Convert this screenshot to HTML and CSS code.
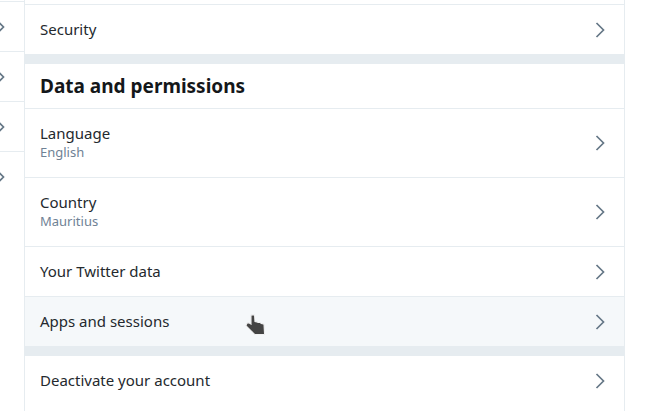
FILE: index.html
```html
<!DOCTYPE html>
<html lang="en">
<head>
<meta charset="utf-8">
<title>Settings</title>
<link rel="stylesheet" href="styles.css">
</head>
<body>
<div class="page">
  <nav class="side">
    <div class="side-row"><svg class="chev" viewBox="0 0 10 16"><path d="M1.500 1l7 7-7 7"/></svg></div>
    <div class="side-row"><svg class="chev" viewBox="0 0 10 16"><path d="M1.500 1l7 7-7 7"/></svg></div>
    <div class="side-row"><svg class="chev" viewBox="0 0 10 16"><path d="M1.500 1l7 7-7 7"/></svg></div>
    <div class="side-row end"><svg class="chev" viewBox="0 0 10 16"><path d="M1.500 1l7 7-7 7"/></svg></div>
  </nav>
  <main class="main">
    <div class="row"><span class="label">Security</span><svg class="chev" viewBox="0 0 10 16"><path d="M1.500 1l7 7-7 7"/></svg></div>
    <div class="band"></div>
    <h2 class="heading">Data and permissions</h2>
    <div class="row tall"><span class="text"><span class="label">Language</span><span class="sub">English</span></span><svg class="chev" viewBox="0 0 10 16"><path d="M1.500 1l7 7-7 7"/></svg></div>
    <div class="row tall"><span class="text"><span class="label">Country</span><span class="sub">Mauritius</span></span><svg class="chev" viewBox="0 0 10 16"><path d="M1.500 1l7 7-7 7"/></svg></div>
    <div class="row"><span class="label">Your Twitter data</span><svg class="chev" viewBox="0 0 10 16"><path d="M1.500 1l7 7-7 7"/></svg></div>
    <div class="row hover"><span class="label">Apps and sessions</span><svg class="chev" viewBox="0 0 10 16"><path d="M1.500 1l7 7-7 7"/></svg></div>
    <div class="band"></div>
    <div class="row last"><span class="label">Deactivate your account</span><svg class="chev" viewBox="0 0 10 16"><path d="M1.500 1l7 7-7 7"/></svg></div>
  </main>
</div>
<svg class="cursor" viewBox="0 0 24 26" width="24" height="26">
  <path d="M7.500 2.500L10 2.500L10.500 9L13 9.500L14 10L16 10L17 11L19.500 11.500L20 21L11 21L8 18L2.500 12.500L3.500 10.500L5 10.500L7.500 12Z" fill="#444" stroke="#fff" stroke-width="1.400" paint-order="stroke"/>
</svg>
</body>
</html>
```
FILE: styles.css
```css
html, body {
  margin: 0;
  padding: 0;
  height: 411px;
  overflow: hidden;
  background: #fff;
  font-family: "Noto Sans", sans-serif;
  color: #24292e;
}
.page {
  display: flex;
  align-items: flex-start;
  margin-top: -45px;
}
.side {
  width: 24px;
  flex: none;
  margin-top: 46px;
  border-top: 1px solid #e6ecf0;
  overflow: hidden;
}
.side-row {
  height: 49px;
  border-bottom: 1px solid #e6ecf0;
  display: flex;
  align-items: center;
}
.side-row.end { border-bottom: 0; }
.side .chev { margin-left: -5px; flex: none; }
.main {
  width: 599px;
  flex: none;
  border-left: 1px solid #e6ecf0;
  border-right: 1px solid #e6ecf0;
  padding-top: 49px;
}
.row {
  height: 49px;
  border-top: 1px solid #e6ecf0;
  display: flex;
  align-items: center;
  justify-content: space-between;
  padding: 0 19px 0 15px;
}
.row .label, .row .text { margin-top: -2px; }
.row .text .label { margin-top: 0; }
.row.tall { height: 68px; }
.row.hover { background: #f5f8fa; }
.row.last { border-top: 0; padding-bottom: 12px; }
.label {
  font-size: 15px;
  line-height: 20px;
  display: block;
}
.sub {
  display: block;
  font-size: 13px;
  line-height: 18px;
  color: #6f8295;
}
.text { display: block; }
.band {
  height: 10px;
  background: #e6ecf0;
}
.heading {
  margin: 0;
  height: 44px;
  padding: 0 15px;
  font-size: 19px;
  font-weight: 700;
  line-height: 44px;
  color: #14171a;
}
.chev {
  width: 10px;
  height: 16px;
  fill: none;
  stroke: #657786;
  stroke-width: 1.700;
}
.cursor {
  position: absolute;
  left: 244px;
  top: 313px;
  filter: drop-shadow(0.5px 0.5px 0.5px rgba(0, 0, 0, 0.25));
}
```
